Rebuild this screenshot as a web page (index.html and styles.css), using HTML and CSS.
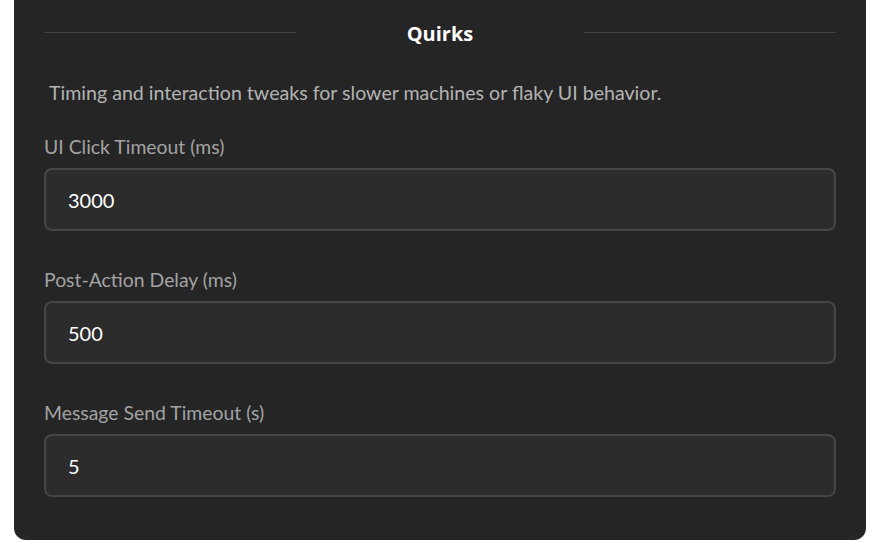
FILE: index.html
```html
<!DOCTYPE html>
<html lang="en">
<head>
<meta charset="utf-8">
<title>Quirks</title>
<link rel="stylesheet" href="styles.css">
</head>
<body>
<section class="panel">
  <div class="section-head">
    <span class="rule"></span>
    <h2 class="title">Quirks</h2>
    <span class="rule"></span>
  </div>
  <p class="desc">Timing and interaction tweaks for slower machines or flaky UI behavior.</p>
  <div class="field">
    <label class="label" for="f1">UI Click Timeout (ms)</label>
    <input class="input" id="f1" type="text" value="3000">
  </div>
  <div class="field">
    <label class="label" for="f2">Post-Action Delay (ms)</label>
    <input class="input" id="f2" type="text" value="500">
  </div>
  <div class="field">
    <label class="label" for="f3">Message Send Timeout (s)</label>
    <input class="input" id="f3" type="text" value="5">
  </div>
</section>
</body>
</html>
```
FILE: styles.css
```css
* { box-sizing: border-box; }
html, body { margin: 0; padding: 0; background: #ffffff; }
body { font-family: Lato, "Noto Sans", sans-serif; }

.panel {
  width: 852px;
  margin-left: 14px;
  background: #252525;
  border-radius: 0 0 12px 12px;
  padding: 19px 30px 43px;
  display: flex;
  flex-direction: column;
}

.section-head {
  display: flex;
  align-items: center;
  height: 28px;
}
.rule {
  flex: 1;
  height: 1px;
  margin-top: -1px;
  background: #444444;
}
.title {
  margin: 0;
  width: 288px;
  padding-top: 2px;
  text-align: center;
  font-family: "Open Sans", sans-serif;
  font-weight: 700;
  font-size: 20px;
  line-height: 28px;
  color: #ffffff;
}

.desc {
  margin: 33px 0 0;
  padding-left: 5px;
  font-size: 19.6px;
  line-height: 26px;
  color: #b3b3b3;
}

.field {
  display: flex;
  flex-direction: column;
  gap: 8px;
  margin-top: 28px;
}
.field + .field { margin-top: 36px; }

.label {
  font-size: 19.4px;
  line-height: 26px;
  color: #a3a3a3;
}

.input {
  height: 63px;
  width: 100%;
  background: #2c2c2c;
  border: 2px solid #464646;
  border-radius: 8px;
  padding: 0 22px;
  font-family: Lato, "Noto Sans", sans-serif;
  font-size: 20px;
  color: #ffffff;
  outline: none;
}
```
